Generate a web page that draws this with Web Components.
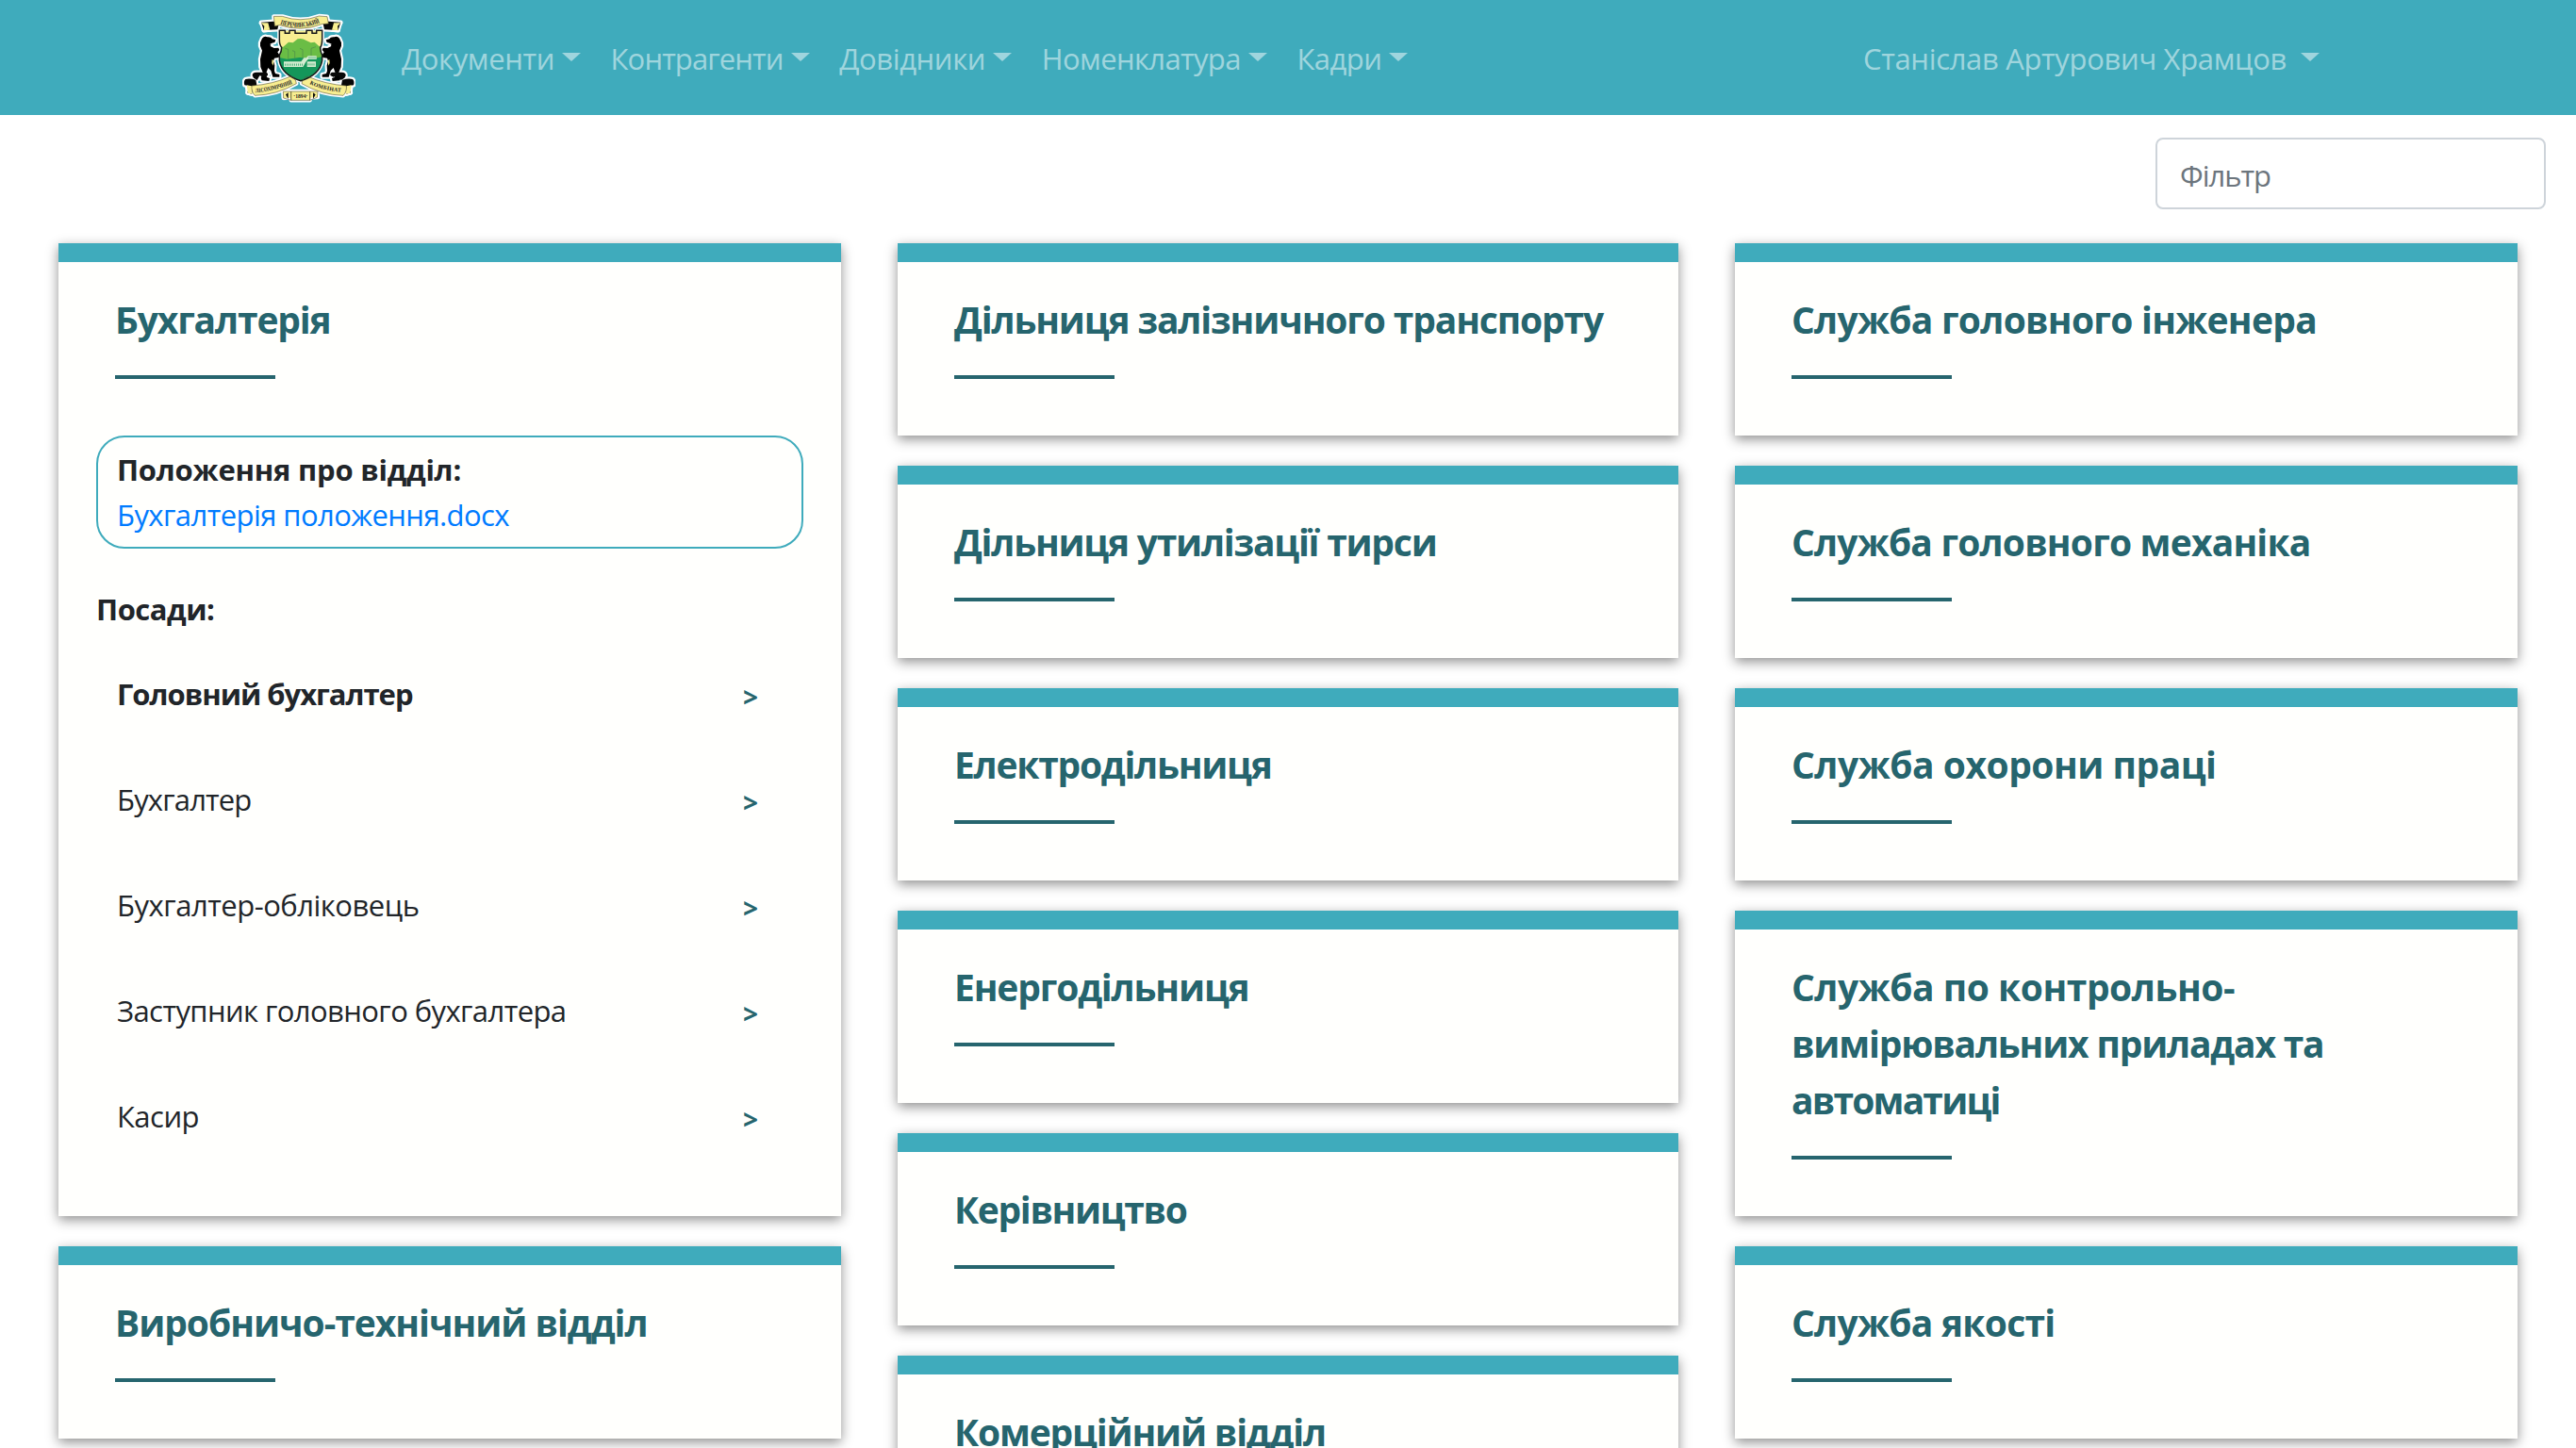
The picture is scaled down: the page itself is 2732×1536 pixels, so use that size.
<!DOCTYPE html>
<html lang="uk">
<head>
<meta charset="utf-8">
<title>Відділи</title>
<style>
html,body{margin:0;height:1536px;overflow:hidden}
body{background:#fff;color:#212529;font:31px/48px "Open Sans","Noto Sans",sans-serif;--teal:#3fabbc;--dark:#26656e}
</style>
</head>
<body>
<departments-page></departments-page>
<script>
function define(name, html, setup) {
  const t = document.createElement('template');
  t.innerHTML = html;
  customElements.define(name, class extends HTMLElement {
    connectedCallback() {
      if (this.shadowRoot) return;
      this.attachShadow({mode: 'open'}).append(t.content.cloneNode(true));
      if (setup) setup(this, this.shadowRoot);
    }
  });
}

/* A line of text tracked out to the advance given in its "w" attribute. */
define('fit-text', `<style>:host{display:inline-block;white-space:nowrap}</style><slot></slot>`, el => {
  const w = +el.getAttribute('w');
  const n = el.textContent.length;
  const natural = el.getBoundingClientRect().width;
  if (w && natural) el.style.letterSpacing = ((w - natural) / n).toFixed(3) + 'px';
});

define('company-crest', `<style>:host{display:block;width:120px;height:98px}svg{display:block}text{font-family:"Liberation Serif",serif;fill:#222;font-weight:bold}</style>
<svg width="120" height="98" viewBox="48 38 360 294">
  <defs>
    <path id="top" d="M169 76Q234 98 299 69"/>
    <path id="left" d="M90 294Q155 287 211 264"/>
    <path id="right" d="M262 266Q305 288 367 292"/>
    <g id="bear">
      <path d="M111 121Q118 112 128 117Q140 116 143 123L154 126L151 134L140 137L137 146L149 152L163 151L166 158L160 165L166 174L164 182L150 184L147 193L151 207L150 225L153 233L166 236L166 244L145 244L139 224L130 215L124 231L126 245L135 248L133 257L110 255L107 248L113 229L106 212L105 187L111 160L105 145L105 135Z"/>
    </g>
    <g id="scroll">
      <path d="M80 240Q79 229 93 229L124 229Q132 233 128 240L119 244L103 240L95 254L84 247Z" fill="#080808"/>
      <path d="M58 251Q71 247 91 253L94 270L84 274L78 298L64 294L72 273L55 270Q51 258 58 251Z" fill="#080808"/>
      <path d="M62 270L78 273L80 298L66 295Z" fill="#f8ee91"/>
      <path d="M78 272Q145 267 202 242Q218 247 220 265Q158 301 88 303Q76 291 78 272Z" fill="#f8ee91"/>
    </g>
    <g id="art">
      <use href="#bear"/><use href="#bear" transform="translate(468) scale(-1 1)"/>
      <use href="#scroll"/><use href="#scroll" transform="translate(457) scale(-1 1)"/>
      <path d="M108 70L147 67L164 74L160 93L116 95L112 82Z" fill="#080808"/>
      <path d="M361 70L322 67L305 74L309 93L353 95L357 82Z" fill="#080808"/>
      <path d="M107 72L130 72L136 94L116 96L118 82Z" fill="#f8ee91"/>
      <path d="M361 72L339 72L333 94L353 96L351 82Z" fill="#f8ee91"/>
      <path d="M148 51L175 51Q234 72 292 50L318 52L322 74L301 76Q234 102 166 79L151 82Z" fill="#f8ee91"/>
      <path d="M166 96H184V105H198V96H216V105H252V96H270V105H284V96H302V125Q302 142 296 151Q297 166 302 174V192Q294 238 234 256Q174 238 166 192V174Q173 164 173 150Q166 142 166 125Z" fill="#f8ee91"/>
      <path d="M178 290H286L288 308L263 310V318H203V310L179 311Z" fill="#f8ee91"/>
    </g>
    <clipPath id="shield"><path d="M166 96H302V125Q302 142 296 151Q297 166 302 174V192Q294 238 234 256Q174 238 166 192V174Q173 164 173 150Q166 142 166 125Z"/></clipPath>
  </defs>
  <use href="#art" stroke="#fff" stroke-width="13" stroke-linejoin="round"/>
  <use href="#art"/>
  <g clip-path="url(#shield)">
    <path d="M160 90H310V160H160Z" fill="#f8ee91"/>
    <path d="M160 150L178 148L195 133L209 135L224 123Q238 119 250 127L266 135L278 133L292 146L310 151V194H160Z" fill="#6abd45"/>
    <path d="M160 181L190 187L230 182L270 186L310 178V265H160Z" fill="#14965a"/>
    <path d="M184 153l10 3v31M207 160l8 3v24M231 153l9 4v28M282 148l-15 5v30" fill="none" stroke="#4c8a4c" stroke-width="2"/>
    <path d="M180 195H235L244 183H252L257 177H284V188H257L250 196L241 212H180Z" fill="#d4ecd0"/>
    <path d="M254 195H282V212H254Z" fill="#d4ecd0"/>
    <path d="M183 205H239M257 204H281M260 183H282" stroke="#14965a" stroke-width="7" stroke-dasharray="2 4"/>
  </g>
  <path d="M166 96H184V105H198V96H216V105H252V96H270V105H284V96H302V125Q302 142 296 151Q297 166 302 174V192Q294 238 234 256Q174 238 166 192V174Q173 164 173 150Q166 142 166 125Z" fill="none" stroke="#17191a" stroke-width="4.5"/>
  <path d="M148 51L175 51Q234 72 292 50L318 52L322 74L301 76Q234 102 166 79L151 82ZM78 272Q145 267 202 242Q218 247 220 265Q158 301 88 303Q76 291 78 272ZM379 272Q312 267 255 242Q239 247 237 265Q299 301 369 303Q381 291 379 272ZM178 290H203V318L179 311ZM288 290H263V318L286 309ZM203 290H263V318H203Z" fill="none" stroke="#5a5734" stroke-width="1.8"/>
  <path d="M143 188l5 4-2 16-4-8zM325 188l-5 4 2 16 4-8z" fill="#f8ee91"/>
  <path d="M186 300l8-6v20zM281 300l-8-6v20z" fill="#080808"/>
  <path d="M148 137l-12 3M320 137l12 3" stroke="#fff" stroke-width="2"/>
  <text font-size="22" textLength="128" lengthAdjust="spacingAndGlyphs"><textPath href="#top">ПЕРЕЧИНСЬКИЙ</textPath></text>
  <text font-size="19" textLength="121" lengthAdjust="spacingAndGlyphs"><textPath href="#left">ЛІСОХІМІЧНИЙ</textPath></text>
  <text font-size="18" textLength="104"><textPath href="#right">КОМБІНАТ</textPath></text>
  <text x="211" y="310" font-size="17" textLength="45">·1894·</text>
</svg>`);

define('nav-item', `<style>
:host{display:flex;align-items:flex-start;height:48px;color:rgba(255,255,255,.5)}
i{width:0;height:0;margin:18px 0 0 8px;border:10px solid transparent;border-top:9px solid rgba(255,255,255,.5);border-bottom:0}
:host([user]) i{margin-left:15px}
</style><slot></slot><i></i>`);

define('top-bar', `<style>
:host{display:flex;height:122px;box-sizing:border-box;padding:13px 272px 0 257px;background:var(--teal);align-items:flex-start}
nav{display:flex;gap:31.6px;padding:25px 0 0 49px;flex:1}
nav+nav-item{margin-top:25px}
</style>
<company-crest></company-crest>
<nav>
<nav-item><fit-text w="162">Документи</fit-text></nav-item>
<nav-item><fit-text w="183">Контрагенти</fit-text></nav-item>
<nav-item><fit-text w="155">Довідники</fit-text></nav-item>
<nav-item><fit-text w="211">Номенклатура</fit-text></nav-item>
<nav-item><fit-text w="90">Кадри</fit-text></nav-item>
</nav>
<nav-item user><fit-text w="449">Станіслав Артурович Храмцов</fit-text></nav-item>`);

define('filter-box', `<style>
:host{display:block;box-sizing:border-box;width:414px;height:76px;border:2px solid #ced4da;border-radius:8px;padding:14px 24px 0;color:#6c757d;background:#fff}
</style><fit-text w="96">Фільтр</fit-text>`);

define('department-card', `<style>
:host{display:block;border-top:20px solid var(--teal);background:#fffffd;box-shadow:0 4px 12px rgba(0,0,0,.44)}
header{padding:31px 60px 60px}
h2{margin:0 0 29px;font-size:39px;line-height:60px;font-weight:700;color:var(--dark);display:flex;flex-direction:column;align-items:flex-start}
hr{margin:0;border:0;width:170px;height:4px;background:var(--dark)}
</style><header><h2><slot name="title"></slot></h2><hr></header><slot></slot>`);

define('regulation-box', `<style>
:host{display:flex;flex-direction:column;align-items:flex-start;box-sizing:border-box;height:120px;margin:0 40px;border:2px solid var(--teal);border-radius:30px;padding:10px 20px 0}
b{font-weight:700}a{color:#007bff;text-decoration:none}
</style><b><fit-text w="365">Положення про відділ:</fit-text></b><a><slot></slot></a>`);

define('position-row', `<style>
:host{display:flex;justify-content:space-between;align-items:center;height:112px;box-sizing:border-box;padding:0 88px 0 62px}
b{font-size:28px;color:var(--dark);line-height:48px;margin-top:6px}
</style><slot></slot><b>&gt;</b>`);

define('position-list', `<style>
:host{display:block;padding:40px 0 50px}
p{margin:0 0 10px 40px;height:48px;font-weight:700}
</style><p><fit-text w="125.5">Посади:</fit-text></p><slot></slot>`);

const card = (...lines) => `<department-card>${lines.map(([t, w]) => `<fit-text slot="title" w="${w}">${t}</fit-text>`).join('')}</department-card>`;

define('departments-page', `<style>
:host{display:flex;flex-direction:column;height:1536px;overflow:hidden}
top-bar{flex:none}
.tools{display:flex;justify-content:flex-end;padding:24px 32px 36px 0}
main{display:grid;grid-template-columns:830px 828px 830px;gap:60px;padding:0 62px;align-items:start}
section{display:flex;flex-direction:column;gap:32px}
</style>
<top-bar></top-bar>
<div class="tools"><filter-box></filter-box></div>
<main>
<section>
<department-card><fit-text slot="title" w="228.5">Бухгалтерія</fit-text>
<regulation-box><fit-text w="416">Бухгалтерія положення.docx</fit-text></regulation-box>
<position-list>
<position-row><fit-text w="313.5" style="font-weight:700">Головний бухгалтер</fit-text></position-row>
<position-row><fit-text w="142.5">Бухгалтер</fit-text></position-row>
<position-row><fit-text w="320.5">Бухгалтер-обліковець</fit-text></position-row>
<position-row><fit-text w="476.5">Заступник головного бухгалтера</fit-text></position-row>
<position-row><fit-text w="87">Касир</fit-text></position-row>
</position-list></department-card>
${card(['Виробничо-технічний відділ', 564.5])}
</section>
<section>
${card(['Дільниця залізничного транспорту', 688])}
${card(['Дільниця утилізації тирси', 511.5])}
${card(['Електродільниця', 336.5])}
${card(['Енергодільниця', 312.5])}
${card(['Керівництво', 246.5])}
${card(['Комерційний відділ', 394])}
</section>
<section>
${card(['Служба головного інженера', 557])}
${card(['Служба головного механіка', 550.5])}
${card(['Служба охорони праці', 450.5])}
${card(['Служба по контрольно-', 470], ['вимірювальних приладах та', 564.5], ['автоматиці', 220.5])}
${card(['Служба якості', 279.5])}
</section>
</main>`);
</script>
</body>
</html>
